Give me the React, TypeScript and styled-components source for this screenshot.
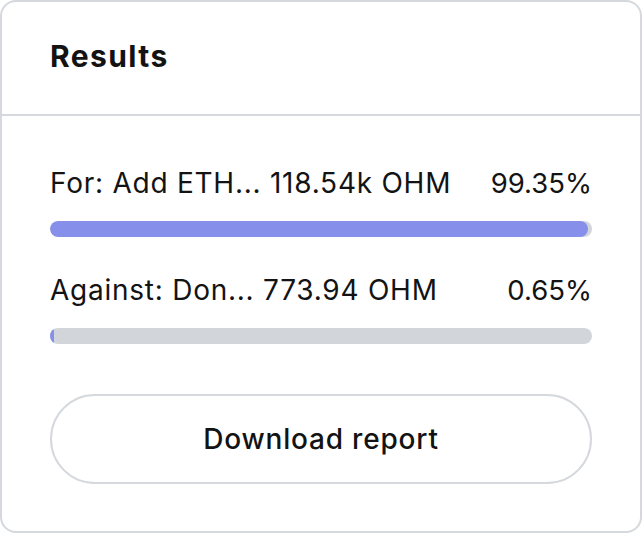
import React from "react";
import styled, { createGlobalStyle } from "styled-components";

const Global = createGlobalStyle`
  html, body { margin: 0; padding: 0; background: #ffffff; }
  body { font-family: Inter, "Noto Sans", "Liberation Sans", sans-serif; color: #131313; }
  * { box-sizing: border-box; }
`;

const Card = styled.section`
  width: 642px;
  height: 533px;
  border: 2px solid #d5d8dc;
  border-radius: 16px;
  background: #ffffff;
  display: flex;
  flex-direction: column;
  overflow: hidden;
`;

const Header = styled.header`
  height: 114px;
  flex: none;
  display: flex;
  align-items: center;
  padding: 0 48px 5px;
  border-bottom: 2px solid #d5d8dc;
`;

const Title = styled.h2`
  margin: 0;
  font-size: 30px;
  font-weight: 700;
  letter-spacing: 1.4px;
  color: #131313;
`;

const Body = styled.div`
  padding: 49px 48px 48px;
  display: flex;
  flex-direction: column;
`;

const Option = styled.div<{ $last?: boolean }>`
  display: flex;
  flex-direction: column;
  gap: 20px;
  margin-bottom: ${(p) => (p.$last ? "50px" : "35px")};
`;

const LabelRow = styled.div`
  display: flex;
  justify-content: space-between;
  align-items: center;
  height: 36px;
  color: #131313;
`;

const Label = styled.span`
  font-size: 28px;
  letter-spacing: 0.75px;
`;

const Percent = styled.span`
  font-size: 27.5px;
`;

const Track = styled.div`
  height: 16px;
  border-radius: 8px;
  background: #d2d5da;
  overflow: hidden;
`;

const Fill = styled.div`
  height: 100%;
  border-radius: 8px;
  background: #8690ea;
`;

const Button = styled.button`
  height: 90px;
  width: 100%;
  border: 2px solid #d5d8dc;
  border-radius: 45px;
  background: #ffffff;
  font-family: inherit;
  font-size: 28px;
  font-weight: 500;
  letter-spacing: 0.8px;
  color: #131313;
  cursor: pointer;
`;

const options = [
  { label: "For: Add ETH... 118.54k OHM", pct: 99.35 },
  { label: "Against: Don... 773.94 OHM", pct: 0.65 },
];

export default function App() {
  return (
    <>
      <Global />
      <Card>
        <Header>
          <Title>Results</Title>
        </Header>
        <Body>
          {options.map((o, i) => (
            <Option key={o.label} $last={i === options.length - 1}>
              <LabelRow>
                <Label>{o.label}</Label>
                <Percent>{o.pct.toFixed(2)}%</Percent>
              </LabelRow>
              <Track>
                <Fill style={{ width: `${o.pct}%` }} />
              </Track>
            </Option>
          ))}
          <Button>Download report</Button>
        </Body>
      </Card>
    </>
  );
}
